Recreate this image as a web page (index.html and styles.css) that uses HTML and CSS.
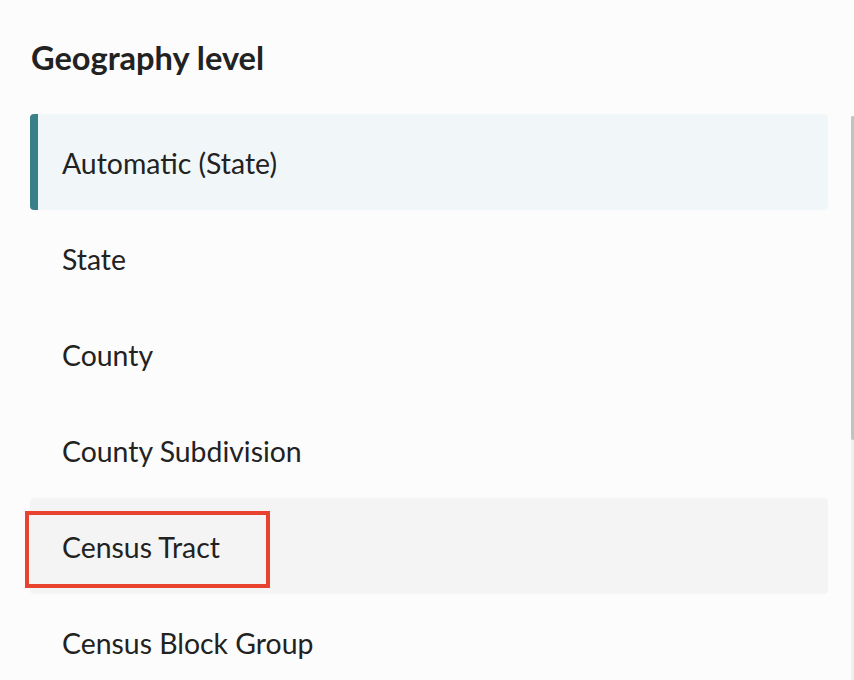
FILE: index.html
```html
<!DOCTYPE html>
<html>
<head>
<meta charset="utf-8">
<link rel="stylesheet" href="styles.css">
</head>
<body>
<div class="panel">
  <h2 class="title">Geography level</h2>
  <ul class="levels">
    <li class="level selected">Automatic (State)</li>
    <li class="level">State</li>
    <li class="level">County</li>
    <li class="level">County Subdivision</li>
    <li class="level hovered">Census Tract<span class="highlight"></span></li>
    <li class="level">Census Block Group</li>
  </ul>
</div>
<div class="scrollbar"><div class="thumb"></div></div>
</body>
</html>
```

FILE: styles.css
```css
html, body {
  margin: 0;
  padding: 0;
  background: #fcfcfc;
  overflow: hidden;
  height: 680px;
}
body {
  font-family: Lato, "Noto Sans", sans-serif;
  color: #222;
  position: relative;
}
.panel {
  padding: 0 26px 0 30px;
}
.title {
  margin: 0;
  height: 114px;
  box-sizing: border-box;
  padding-top: 40px;
  padding-left: 1px;
  font-size: 32.6px;
  font-weight: 700;
  line-height: 36px;
  color: #222;
}
.levels {
  list-style: none;
  margin: 0;
  padding: 0;
}
.level {
  position: relative;
  height: 96px;
  display: flex;
  align-items: center;
  padding-left: 32px;
  padding-top: 2px;
  box-sizing: border-box;
  font-size: 28.4px;
  color: #222;
  border-radius: 4px;
}
.selected {
  background: #f1f7f8;
  border-left: 8px solid #3a808a;
  padding-left: 24px;
}
.hovered {
  background: #f4f4f4;
}
.highlight {
  position: absolute;
  left: -5px;
  top: 13px;
  width: 245px;
  height: 77px;
  box-sizing: border-box;
  border: 4px solid #e8432e;
}
.scrollbar {
  position: absolute;
  right: 0;
  top: 116px;
  bottom: 0;
  width: 3px;
  background: #f0f0f0;
}
.thumb {
  height: 324px;
  background: #c2c2c2;
  border-radius: 2px 0 0 2px;
}
```
